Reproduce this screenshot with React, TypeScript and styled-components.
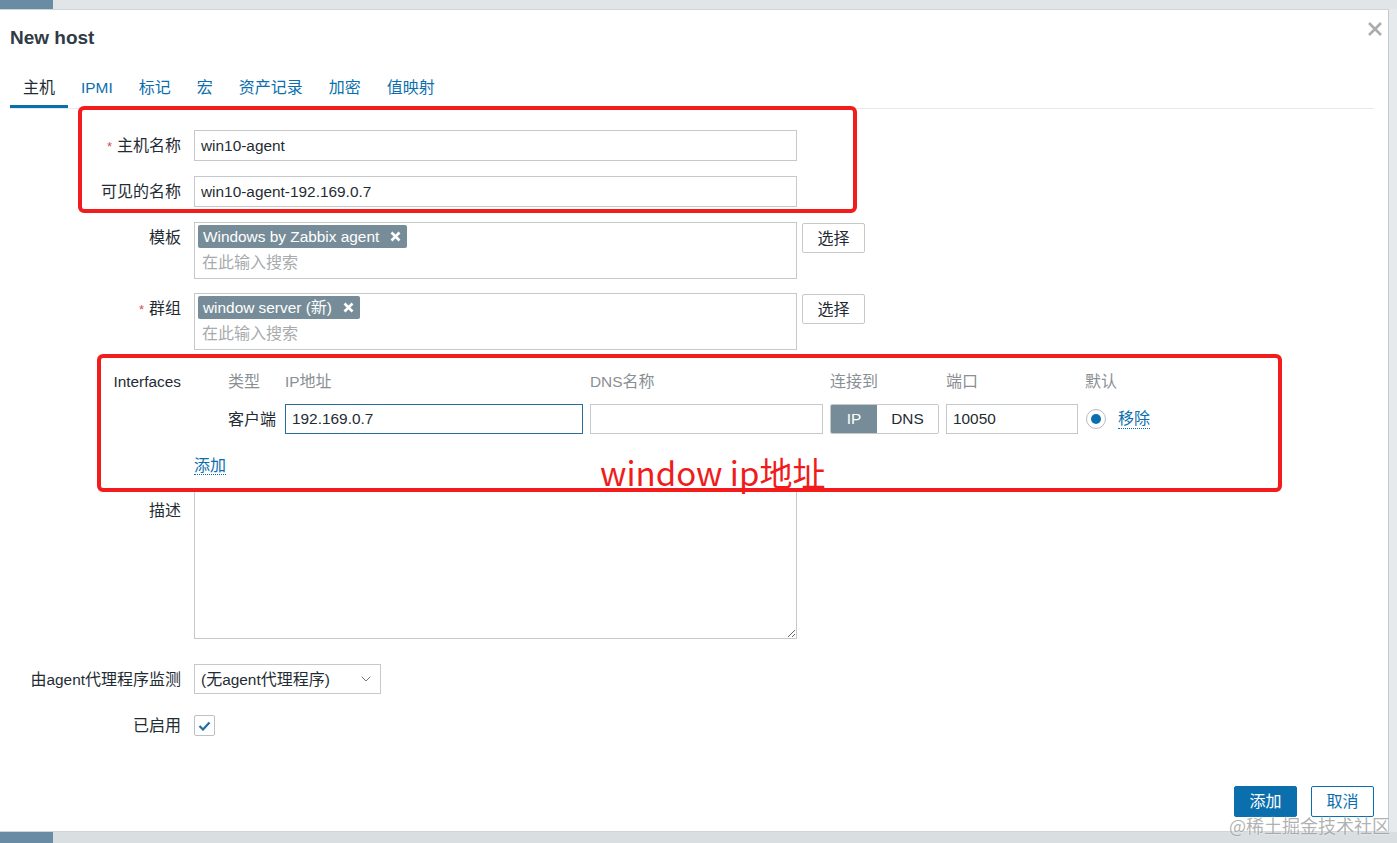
import React from "react";
import styled, { createGlobalStyle } from "styled-components";
import { ChevronDown } from "lucide-react";

const GlobalStyle = createGlobalStyle`
  html, body {
    margin: 0;
    padding: 0;
  }
  body {
    font-family: "Liberation Sans", Arial, "Noto Sans CJK SC", sans-serif;
    font-size: 15.4px;
    color: #1f2c33;
    background: #e4e7e9;
  }
  * {
    box-sizing: border-box;
  }
`;

// Chinese glyphs in the screenshot come out a touch wider than the latin text
const Han = styled.span`
  font-family: "Noto Sans CJK SC", sans-serif;
  font-size: 16px;
  line-height: 1;
`;

const zh = (text: string) =>
  text.split(/([\u3000-\u9fff\uff00-\uffef]+)/).map((part, i) =>
    /[\u3000-\u9fff\uff00-\uffef]/.test(part) ? <Han key={i}>{part}</Han> : part
  );

const Page = styled.div`
  position: relative;
  width: 1397px;
  height: 843px;
  display: flex;
  flex-direction: column;
  overflow: hidden;
`;

const Strip = styled.div<{ $h: number; $bg: string }>`
  height: ${(p) => p.$h}px;
  display: flex;
  flex-shrink: 0;
  background: ${(p) => p.$bg};
`;

const StripBlock = styled.div`
  width: 53px;
  background: #6a8ba4;
`;

const Middle = styled.div`
  flex: 1;
  display: flex;
  min-height: 0;
`;

const Dialog = styled.div`
  flex: 1;
  display: flex;
  flex-direction: column;
  background: #fff;
  border-top: 1px solid #cfd4d7;
  border-bottom: 1px solid #cfd4d7;
  border-right: 1px solid #c4c9cc;
  padding: 0 14px 0 10px;
`;

const RightEdge = styled.div`
  width: 8px;
  background: #e7eaec;
`;

const Header = styled.div`
  display: flex;
  justify-content: space-between;
  align-items: flex-start;
`;

const Title = styled.h4`
  margin: 16px 0 0;
  font-size: 19px;
  line-height: 24px;
  font-weight: bold;
  color: #2f3b45;
`;

const Close = styled.svg`
  margin-top: 7px;
  margin-right: -13px;
`;

const TabList = styled.div`
  display: flex;
  margin-top: 20px;
  border-bottom: 1px solid #e6e9eb;
`;

const Tab = styled.div<{ $active?: boolean }>`
  height: 38px;
  line-height: 36px;
  padding: 0 13px;
  border-bottom: 3px solid ${(p) => (p.$active ? "#0b6fae" : "transparent")};
  color: ${(p) => (p.$active ? "#1f2c33" : "#0b6fae")};
  white-space: nowrap;
`;

const Form = styled.div`
  flex: 1;
  display: flex;
  flex-direction: column;
  padding-top: 21px;
`;

const Row = styled.div<{ $mt?: number; $center?: boolean }>`
  display: flex;
  align-items: ${(p) => (p.$center ? "center" : "flex-start")};
  margin-top: ${(p) => p.$mt ?? 0}px;
`;

const Label = styled.div<{ $lh?: number; $pt?: number }>`
  width: 184px;
  flex-shrink: 0;
  padding-right: 13px;
  padding-top: ${(p) => p.$pt ?? 0}px;
  text-align: right;
  line-height: ${(p) => p.$lh ?? 31}px;
  white-space: nowrap;
`;

const Req = styled.span`
  color: #d64e4e;
  font-size: 13px;
  margin-right: 5px;
`;

const TextInput = styled.input<{ $w?: number; $focus?: boolean }>`
  width: ${(p) => p.$w ?? 603}px;
  height: ${(p) => (p.$w ? 30 : 31)}px;
  border: 1px solid ${(p) => (p.$focus ? "#2a6d98" : "#c5c9cc")};
  padding: 0 6px;
  font: inherit;
  color: #1f2c33;
  background: #fff;
  outline: none;
`;

const MultiBox = styled.div`
  width: 603px;
  height: 57px;
  border: 1px solid #c5c9cc;
  padding: 2px 3px;
  display: flex;
  flex-direction: column;
  align-items: flex-start;
`;

const Chip = styled.span`
  display: inline-flex;
  align-items: center;
  gap: 11px;
  height: 24px;
  padding: 0 6px 0 5px;
  border-radius: 2px;
  background: #768d99;
  color: #fff;
  white-space: nowrap;
`;

const Placeholder = styled.div`
  padding-left: 4px;
  margin-top: 2px;
  line-height: 26px;
  color: #a7abae;
`;

const Button = styled.button<{ $primary?: boolean }>`
  width: 63px;
  height: 31px;
  border-radius: 2px;
  font: inherit;
  border: 1px solid #0b6fae;
  background: ${(p) => (p.$primary ? "#0b6fae" : "#fff")};
  color: ${(p) => (p.$primary ? "#fff" : "#0b6fae")};
`;

const PickButton = styled.button`
  width: 63px;
  height: 30px;
  margin: 1px 0 0 5px;
  border: 1px solid #c5c9cc;
  border-radius: 2px;
  background: #fff;
  font: inherit;
  color: #1f2c33;
`;

const IfaceBlock = styled.div`
  display: flex;
  flex-direction: column;
`;

const IfaceGrid = styled.div`
  display: grid;
  grid-template-columns: 50px 298px 233px 109px 132px auto;
  column-gap: 7px;
  row-gap: 7px;
  margin-left: 34px;
  align-items: center;
`;

const HeadCell = styled.div`
  line-height: 31px;
  color: #8a8f94;
  white-space: nowrap;
`;

const TypeCell = styled.div`
  white-space: nowrap;
`;

const Toggle = styled.div`
  display: flex;
  height: 30px;
  border: 1px solid #c5c9cc;
  border-radius: 2px;
  overflow: hidden;
`;

const ToggleItem = styled.div<{ $on?: boolean }>`
  width: ${(p) => (p.$on ? "46px" : "auto")};
  flex: ${(p) => (p.$on ? "none" : 1)};
  display: flex;
  align-items: center;
  justify-content: center;
  background: ${(p) => (p.$on ? "#768d99" : "#fff")};
  color: ${(p) => (p.$on ? "#fff" : "#1f2c33")};
`;

const DefaultCell = styled.div`
  display: flex;
  align-items: center;
  gap: 12px;
`;

const Radio = styled.span`
  width: 20px;
  height: 20px;
  margin-left: 1px;
  border-radius: 50%;
  border: 1px solid #b8bcbf;
  display: flex;
  align-items: center;
  justify-content: center;
`;

const RadioDot = styled.span`
  width: 10px;
  height: 10px;
  border-radius: 50%;
  background: #0b6fae;
`;

const Link = styled.a`
  color: #0b6fae;
  text-decoration: none;
  border-bottom: 1px dotted #0b6fae;
  line-height: 18px;
`;

const AddLine = styled.div`
  margin-top: 22px;
  line-height: 20px;
`;

const TextArea = styled.textarea`
  width: 603px;
  height: 148px;
  border: 1px solid #c5c9cc;
  font: inherit;
  resize: both;
  outline: none;
`;

const SelectBox = styled.div`
  width: 187px;
  height: 30px;
  border: 1px solid #c5c9cc;
  display: flex;
  align-items: center;
  justify-content: space-between;
  padding: 0 6px;
  white-space: nowrap;
`;

const CheckBox = styled.span`
  width: 21px;
  height: 21px;
  border: 1px solid #bcc1c4;
  border-radius: 2px;
  display: flex;
  align-items: center;
  justify-content: center;
`;

const Footer = styled.div`
  display: flex;
  justify-content: flex-end;
  gap: 14px;
  padding-bottom: 14px;
`;

/* annotations drawn on top of the screenshot */
const RedBox = styled.div`
  position: absolute;
  border: 4px solid #f21c1c;
  border-radius: 6px;
  pointer-events: none;
`;

const RedText = styled.div`
  position: absolute;
  left: 600px;
  top: 450px;
  font-family: "Noto Sans CJK SC", sans-serif;
  font-size: 33px;
  line-height: 44px;
  color: #f01c1c;
  white-space: nowrap;
`;

const Watermark = styled.div`
  position: absolute;
  right: 7px;
  bottom: 5px;
  font-family: "Noto Sans CJK SC", sans-serif;
  font-size: 18px;
  color: rgba(125, 125, 125, 0.6);
  text-shadow: 0 0 2px rgba(255, 255, 255, 0.9);
  white-space: nowrap;
`;

const ChipX = () => (
  <svg width="11" height="11" viewBox="0 0 11 11">
    <path d="M1.5 1.5l8 8M9.5 1.5l-8 8" stroke="#fff" strokeWidth="2.6" />
  </svg>
);

const tabs = ["主机", "IPMI", "标记", "宏", "资产记录", "加密", "值映射"];

export default function App() {
  return (
    <Page>
      <GlobalStyle />
      <Strip $h={9} $bg="#e2e5e7">
        <StripBlock />
      </Strip>
      <Middle>
        <Dialog>
          <Header>
            <Title>New host</Title>
            <Close width="24" height="24" viewBox="0 0 24 24">
              <path d="M6 6l12 12M18 6L6 18" stroke="#a9adb0" strokeWidth="2.6" />
            </Close>
          </Header>
          <TabList>
            {tabs.map((t, i) => (
              <Tab key={t} $active={i === 0}>
                {zh(t)}
              </Tab>
            ))}
          </TabList>

          <Form>
            <Row>
              <Label>
                <Req>*</Req>
                {zh("主机名称")}
              </Label>
              <TextInput defaultValue="win10-agent" />
            </Row>
            <Row $mt={14}>
              <Label>{zh("可见的名称")}</Label>
              <TextInput defaultValue="win10-agent-192.169.0.7" />
            </Row>
            <Row $mt={15}>
              <Label>{zh("模板")}</Label>
              <MultiBox>
                <Chip>
                  Windows by Zabbix agent <ChipX />
                </Chip>
                <Placeholder>{zh("在此输入搜索")}</Placeholder>
              </MultiBox>
              <PickButton>{zh("选择")}</PickButton>
            </Row>
            <Row $mt={14}>
              <Label>
                <Req>*</Req>
                {zh("群组")}
              </Label>
              <MultiBox>
                <Chip>
                  <span>{zh("window server (新)")}</span> <ChipX />
                </Chip>
                <Placeholder>{zh("在此输入搜索")}</Placeholder>
              </MultiBox>
              <PickButton>{zh("选择")}</PickButton>
            </Row>

            <Row $mt={16}>
              <Label>Interfaces</Label>
              <IfaceBlock>
                <IfaceGrid>
                  <HeadCell>{zh("类型")}</HeadCell>
                  <HeadCell>{zh("IP地址")}</HeadCell>
                  <HeadCell>{zh("DNS名称")}</HeadCell>
                  <HeadCell>{zh("连接到")}</HeadCell>
                  <HeadCell>{zh("端口")}</HeadCell>
                  <HeadCell>{zh("默认")}</HeadCell>

                  <TypeCell>{zh("客户端")}</TypeCell>
                  <TextInput $w={298} $focus defaultValue="192.169.0.7" />
                  <TextInput $w={233} defaultValue="" />
                  <Toggle>
                    <ToggleItem $on>IP</ToggleItem>
                    <ToggleItem>DNS</ToggleItem>
                  </Toggle>
                  <TextInput $w={132} defaultValue="10050" />
                  <DefaultCell>
                    <Radio>
                      <RadioDot />
                    </Radio>
                    <Link>{zh("移除")}</Link>
                  </DefaultCell>
                </IfaceGrid>
                <AddLine>
                  <Link>{zh("添加")}</Link>
                </AddLine>
              </IfaceBlock>
            </Row>

            <Row $mt={15}>
              <Label $pt={4}>{zh("描述")}</Label>
              <TextArea />
            </Row>

            <Row $mt={25}>
              <Label>{zh("由agent代理程序监测")}</Label>
              <SelectBox>
                <span>{zh("(无agent代理程序)")}</span>
                <ChevronDown size={16} strokeWidth={1.5} color="#6f767b" />
              </SelectBox>
            </Row>

            <Row $mt={20} $center>
              <Label $lh={21}>{zh("已启用")}</Label>
              <CheckBox>
                <svg width="13" height="10" viewBox="0 0 13 10">
                  <path d="M1.5 5l3.5 3.5L11.5 1.5" stroke="#1f6fa6" strokeWidth="2.2" fill="none" />
                </svg>
              </CheckBox>
            </Row>
          </Form>

          <Footer>
            <Button $primary>{zh("添加")}</Button>
            <Button>{zh("取消")}</Button>
          </Footer>
        </Dialog>
        <RightEdge />
      </Middle>
      <Strip $h={11} $bg="#d9dee0">
        <StripBlock />
      </Strip>

      <RedBox style={{ left: 78, top: 106, width: 779, height: 107 }} />
      <RedBox style={{ left: 97, top: 354, width: 1185, height: 138 }} />
      <RedText>window ip地址</RedText>
      <Watermark>@稀土掘金技术社区</Watermark>
    </Page>
  );
}
